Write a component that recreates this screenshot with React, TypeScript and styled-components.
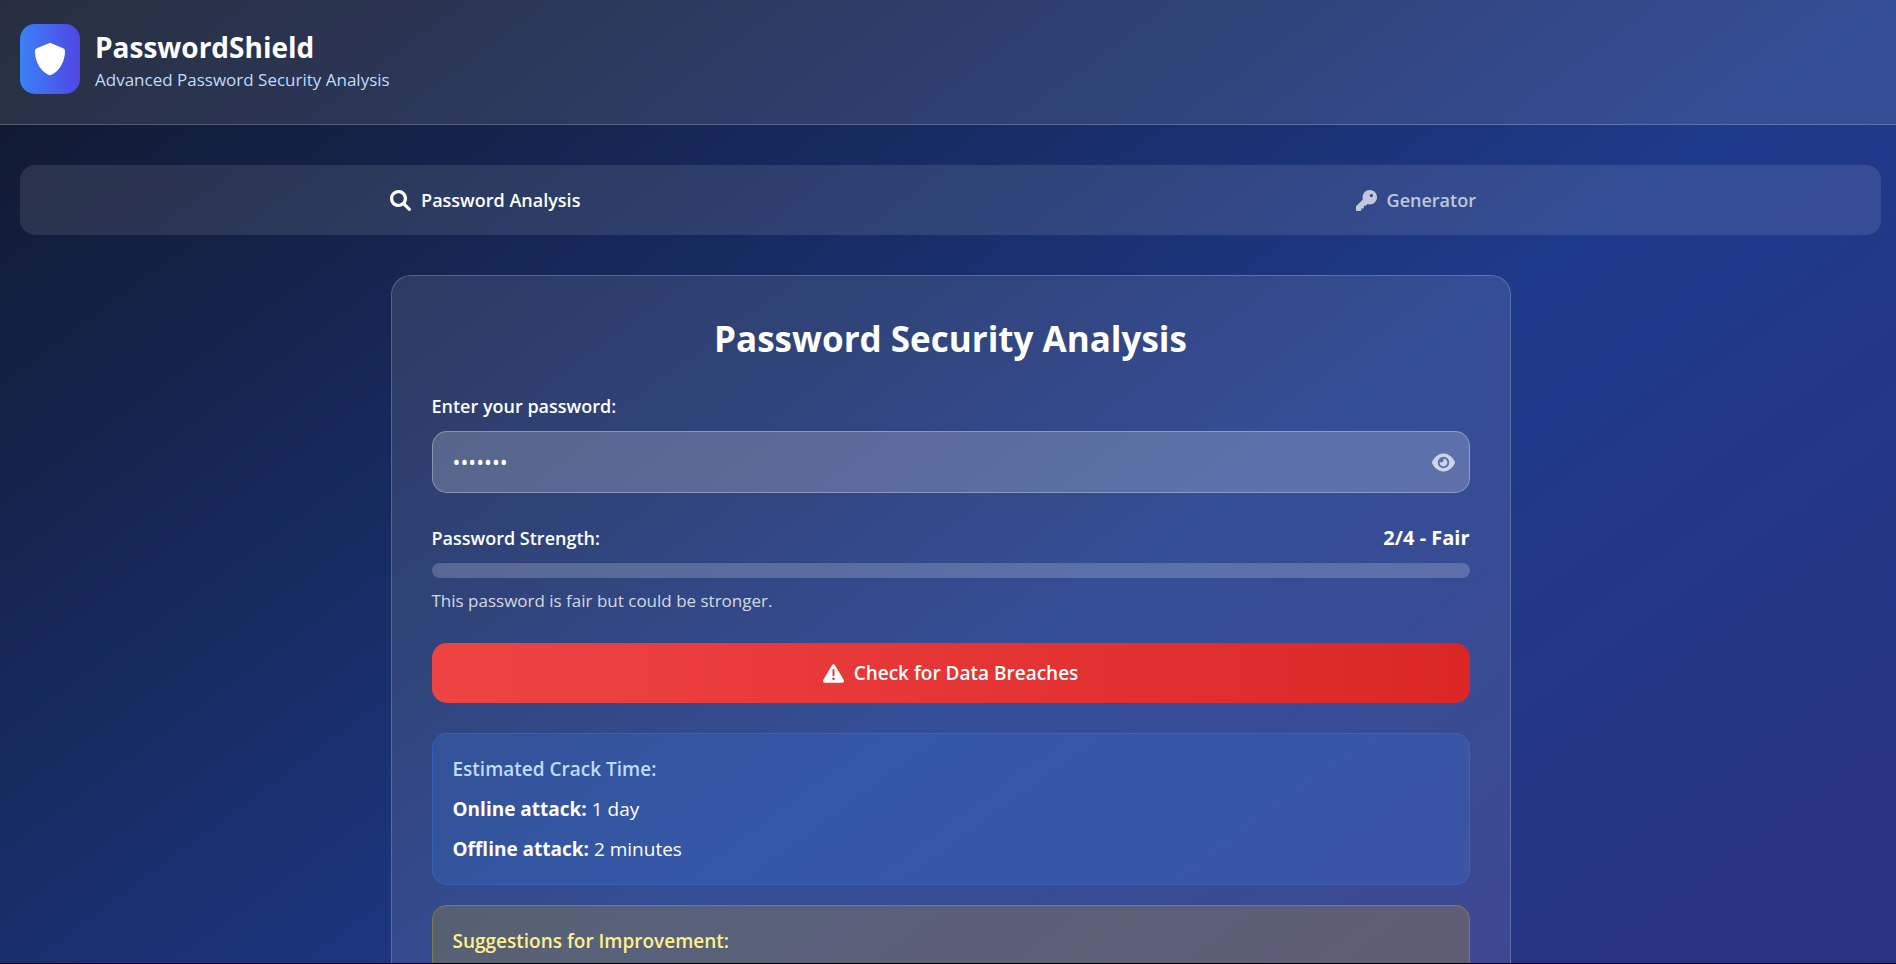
import React, { useState } from 'react';
import styled, { createGlobalStyle } from 'styled-components';
import { FaEye, FaKey } from 'react-icons/fa6';

const GlobalStyle = createGlobalStyle`
  *, *::before, *::after { box-sizing: border-box; }
  body {
    margin: 0;
    color: #fff;
    font-family: 'Segoe UI', 'Open Sans', 'Noto Sans', sans-serif;
    font-size: 19px;
    line-height: 30px;
  }
  h1, h2, h3, p { margin: 0; }
  button, input { font: inherit; color: inherit; }
`;

const Viewport = styled.div`
  height: 100vh;
  overflow: hidden;
  border-bottom: 1px solid #000;
`;

const Page = styled.div`
  min-height: 145vh;
  background: linear-gradient(to bottom right, #0f172a, #1e3a8a, #312e81);
`;

const Header = styled.header`
  display: flex;
  align-items: center;
  gap: 15px;
  padding: 24px 20px 30px;
  background: rgba(255, 255, 255, 0.1);
  border-bottom: 1px solid rgba(255, 255, 255, 0.2);
`;

const Logo = styled.div`
  display: flex;
  align-items: center;
  justify-content: center;
  width: 60px;
  height: 70px;
  border-radius: 15px;
  background: linear-gradient(to right, #3b82f6, #4f46e5);
`;

const BrandName = styled.h1`
  font-size: 28px;
  font-weight: 700;
  line-height: 42px;
`;

const Tagline = styled.p`
  color: #bfdbfe;
  font-size: 17px;
  line-height: 24px;
`;

const Main = styled.main`
  display: flex;
  flex-direction: column;
  align-items: center;
  gap: 40px;
  padding: 40px 15px 40px 20px;
`;

const Tabs = styled.nav`
  display: grid;
  grid-template-columns: 1fr 1fr;
  width: 100%;
  height: 70px;
  border-radius: 15px;
  background: rgba(255, 255, 255, 0.1);
`;

const Tab = styled.button<{ $active: boolean }>`
  display: flex;
  align-items: center;
  justify-content: center;
  gap: 10px;
  padding: 0;
  border: 0;
  background: none;
  color: ${({ $active }) => ($active ? '#fff' : 'rgba(255, 255, 255, 0.7)')};
  font-size: 18px;
  font-weight: 600;
  cursor: pointer;
`;

const Card = styled.section`
  display: flex;
  flex-direction: column;
  gap: 30px;
  width: 100%;
  max-width: 1120px;
  padding: 40px;
  border: 1px solid rgba(255, 255, 255, 0.2);
  border-radius: 20px;
  background: rgba(255, 255, 255, 0.1);
`;

const CardTitle = styled.h2`
  font-size: 35px;
  font-weight: 700;
  line-height: 45px;
  text-align: center;
`;

const Field = styled.div`
  display: flex;
  flex-direction: column;
  gap: 10px;
`;

const Label = styled.label`
  font-size: 18px;
  font-weight: 600;
`;

const InputWrap = styled.div`
  position: relative;
`;

const PasswordInput = styled.input`
  display: block;
  width: 100%;
  height: 62px;
  padding: 0 60px 0 20px;
  border: 1px solid rgba(255, 255, 255, 0.3);
  border-radius: 15px;
  outline: none;
  background: rgba(255, 255, 255, 0.2);
  font-size: 21px;
`;

const RevealButton = styled.button`
  position: absolute;
  top: 0;
  right: 15px;
  bottom: 0;
  display: flex;
  align-items: center;
  padding: 0;
  border: 0;
  background: none;
  color: rgba(255, 255, 255, 0.7);
  cursor: pointer;
`;

const StrengthHead = styled.div`
  display: flex;
  justify-content: space-between;
`;

const Score = styled.strong`
  font-size: 20px;
  font-weight: 700;
`;

const Meter = styled.div`
  height: 15px;
  border-radius: 8px;
  background: rgba(255, 255, 255, 0.2);
`;

const Hint = styled.p`
  color: rgba(255, 255, 255, 0.8);
  font-size: 17px;
  line-height: 25px;
`;

const BreachButton = styled.button`
  display: flex;
  align-items: center;
  justify-content: center;
  gap: 10px;
  height: 60px;
  border: 0;
  border-radius: 15px;
  background: linear-gradient(to right, #ef4444, #dc2626);
  font-weight: 600;
  cursor: pointer;
`;

const Panels = styled.div`
  display: flex;
  flex-direction: column;
  gap: 20px;
`;

const tones = {
  info: { rgb: '59, 130, 246', title: '#bfdbfe' },
  warning: { rgb: '234, 179, 8', title: '#fef08a' },
};

const Panel = styled.section<{ $tone: keyof typeof tones }>`
  display: flex;
  flex-direction: column;
  gap: 10px;
  padding: 20px;
  border: 1px solid rgba(${({ $tone }) => tones[$tone].rgb}, 0.3);
  border-radius: 15px;
  background: rgba(${({ $tone }) => tones[$tone].rgb}, 0.2);

  h3 {
    color: ${({ $tone }) => tones[$tone].title};
    font-size: 19px;
    font-weight: 600;
  }
`;

const Glyph = ({ size, d }: { size: number; d: string }) => (
  <svg width={size} height={size} viewBox="0 0 512 512" fill="currentColor" aria-hidden="true">
    <path d={d} />
  </svg>
);

const shield =
  'M496 127.1C496 381.3 309.1 512 255.1 512C204.9 512 16 385.3 16 127.1c0-19.41 11.7-36.89 29.61-44.37l191.1-80.01c4.906-2.031 13.12-3.701 18.44-3.701c5.281 0 13.58 1.67 18.46 3.701l192 80.01C484.3 90.23 496 107.7 496 127.1z';
const magnifier =
  'M500.3 443.7l-119.7-119.7c27.22-40.41 40.65-90.9 33.46-144.7C401.8 87.79 326.8 13.32 235.2 1.723C99.01-15.51-15.51 99.01 1.724 235.2c11.6 91.64 86.08 166.7 177.6 178.9c53.8 7.189 104.3-6.236 144.7-33.46l119.7 119.7c15.62 15.62 40.95 15.62 56.57 0C515.9 484.7 515.9 459.3 500.3 443.7zM79.1 208c0-70.58 57.42-128 128-128s128 57.42 128 128c0 70.58-57.42 128-128 128S79.1 278.6 79.1 208z';
const warning =
  'M506.3 417l-213.3-364c-16.33-28-57.54-28-73.98 0l-213.2 364C-10.59 444.9 9.849 480 42.74 480h426.6C502.1 480 522.6 445 506.3 417zM232 168c0-13.25 10.75-24 24-24S280 154.8 280 168v128c0 13.25-10.75 24-23.1 24S232 309.3 232 296V168zM256 416c-17.36 0-31.44-14.08-31.44-31.44c0-17.36 14.07-31.44 31.44-31.44s31.44 14.08 31.44 31.44C287.4 401.9 273.4 416 256 416z';

export default function App() {
  const [tab, setTab] = useState('analysis');
  const [password, setPassword] = useState('fairpwd');
  const [visible, setVisible] = useState(false);

  return (
    <>
      <GlobalStyle />
      <Viewport>
        <Page>
          <Header>
            <Logo>
              <Glyph size={32} d={shield} />
            </Logo>
            <div>
              <BrandName>PasswordShield</BrandName>
              <Tagline>Advanced Password Security Analysis</Tagline>
            </div>
          </Header>
          <Main>
            <Tabs>
              <Tab $active={tab === 'analysis'} onClick={() => setTab('analysis')}>
                <Glyph size={21} d={magnifier} />
                Password Analysis
              </Tab>
              <Tab $active={tab === 'generator'} onClick={() => setTab('generator')}>
                <FaKey size={21} />
                Generator
              </Tab>
            </Tabs>
            <Card>
              <CardTitle>Password Security Analysis</CardTitle>
              <Field>
                <Label htmlFor="password">Enter your password:</Label>
                <InputWrap>
                  <PasswordInput
                    id="password"
                    type={visible ? 'text' : 'password'}
                    value={password}
                    onChange={(e) => setPassword(e.target.value)}
                  />
                  <RevealButton aria-label="Show password" onClick={() => setVisible(!visible)}>
                    <FaEye size={23} />
                  </RevealButton>
                </InputWrap>
              </Field>
              <Field>
                <StrengthHead>
                  <Label as="span">Password Strength:</Label>
                  <Score>2/4 - Fair</Score>
                </StrengthHead>
                <Meter />
                <Hint>This password is fair but could be stronger.</Hint>
              </Field>
              <BreachButton>
                <Glyph size={21} d={warning} />
                Check for Data Breaches
              </BreachButton>
              <Panels>
                <Panel $tone="info">
                  <h3>Estimated Crack Time:</h3>
                  <p>
                    <strong>Online attack:</strong> 1 day
                  </p>
                  <p>
                    <strong>Offline attack:</strong> 2 minutes
                  </p>
                </Panel>
                <Panel $tone="warning">
                  <h3>Suggestions for Improvement:</h3>
                </Panel>
              </Panels>
            </Card>
          </Main>
        </Page>
      </Viewport>
    </>
  );
}
